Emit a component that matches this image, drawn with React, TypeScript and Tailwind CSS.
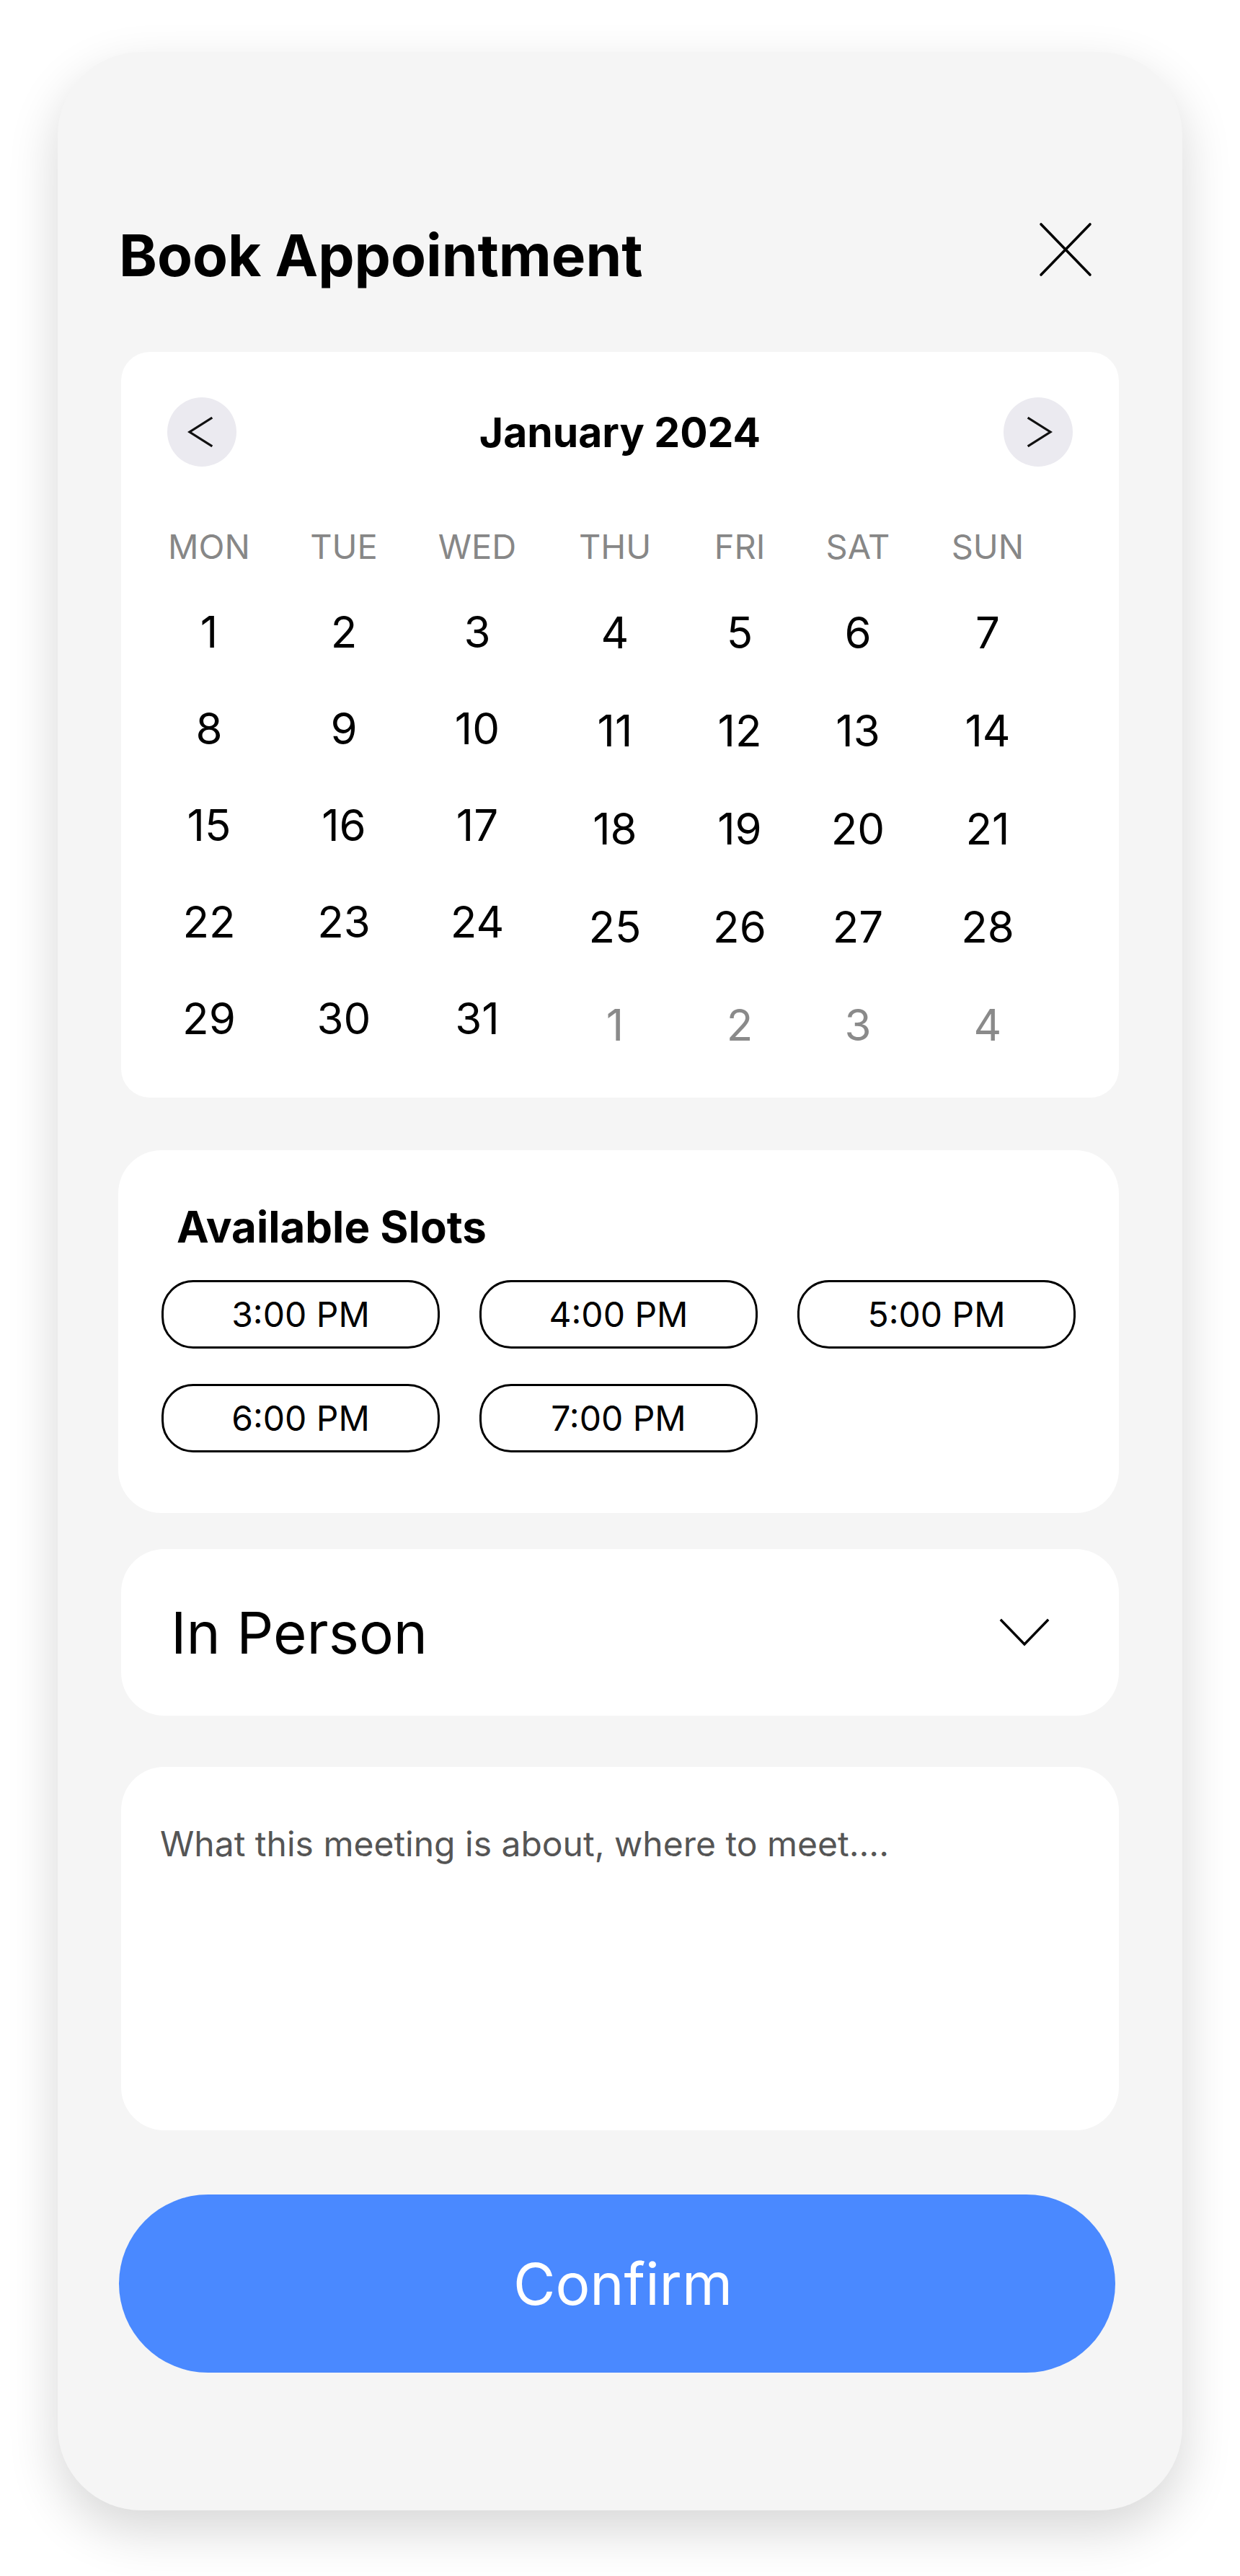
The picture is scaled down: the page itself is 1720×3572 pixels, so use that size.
import React from 'react';

type Day = { n: number; muted?: boolean };

// column offsets follow the reference, which is not an even grid
const columns: { label: string; days: Day[]; rowClass: string; offset: string }[] = [
  { label: 'MON', days: [{ n: 1 }, { n: 8 }, { n: 15 }, { n: 22 }, { n: 29 }], rowClass: 'h-[134px]', offset: 'ml-0' },
  { label: 'TUE', days: [{ n: 2 }, { n: 9 }, { n: 16 }, { n: 23 }, { n: 30 }], rowClass: 'h-[134px]', offset: 'ml-[71px]' },
  { label: 'WED', days: [{ n: 3 }, { n: 10 }, { n: 17 }, { n: 24 }, { n: 31 }], rowClass: 'h-[134px]', offset: 'ml-[69px]' },
  { label: 'THU', days: [{ n: 4 }, { n: 11 }, { n: 18 }, { n: 25 }, { n: 1, muted: true }], rowClass: 'h-[136px]', offset: 'ml-[75px]' },
  { label: 'FRI', days: [{ n: 5 }, { n: 12 }, { n: 19 }, { n: 26 }, { n: 2, muted: true }], rowClass: 'h-[136px]', offset: 'ml-[57px]' },
  { label: 'SAT', days: [{ n: 6 }, { n: 13 }, { n: 20 }, { n: 27 }, { n: 3, muted: true }], rowClass: 'h-[136px]', offset: 'ml-[48px]' },
  { label: 'SUN', days: [{ n: 7 }, { n: 14 }, { n: 21 }, { n: 28 }, { n: 4, muted: true }], rowClass: 'h-[136px]', offset: 'ml-[64px]' },
];

const slots = ['3:00 PM', '4:00 PM', '5:00 PM', '6:00 PM', '7:00 PM'];

const ChevronLeft = () => (
  <svg width="36" height="42" viewBox="0 0 36 42" fill="none">
    <path d="M33 2 L3 21 L33 40" stroke="#111" strokeWidth="3.2" strokeLinecap="square" strokeLinejoin="miter" />
  </svg>
);

const ChevronRight = () => (
  <svg width="36" height="42" viewBox="0 0 36 42" fill="none">
    <path d="M3 2 L33 21 L3 40" stroke="#111" strokeWidth="3.2" strokeLinecap="square" strokeLinejoin="miter" />
  </svg>
);

const CloseIcon = () => (
  <svg width="76" height="78" viewBox="0 0 76 78" fill="none">
    <path d="M4 4 L72 74 M72 4 L4 74" stroke="#000" strokeWidth="3.6" strokeLinecap="round" />
  </svg>
);

const ChevronDown = () => (
  <svg width="70" height="40" viewBox="0 0 70 40" fill="none">
    <path d="M3 3 L35 36 L67 3" stroke="#000" strokeWidth="3.4" strokeLinecap="square" strokeLinejoin="miter" />
  </svg>
);

export default function App() {
  return (
    <div className="min-h-[3572px] w-[1720px] bg-white pt-[72px] pl-[80px] [font-family:Inter,'Noto_Sans',sans-serif] text-black">
      <div className="flex h-[3409px] w-[1560px] flex-col rounded-[116px] bg-[#f5f5f5] px-[88px] pt-[242px] shadow-[0_28px_70px_rgba(0,0,0,0.16)]">
        {/* header */}
        <div className="flex items-start justify-between">
          <h1 className="-ml-[3px] text-[80px] font-bold leading-none">Book Appointment</h1>
          <div className="mr-[36px] -mt-[7px]">
            <CloseIcon />
          </div>
        </div>

        {/* calendar */}
        <div className="mt-[94px] rounded-[40px] bg-white px-[64px] pt-[63px] pb-[33px]">
          <div className="flex items-center justify-between">
            <button className="flex h-[96px] w-[96px] items-center justify-center rounded-full bg-[#ebeaf0] pr-[4px]">
              <ChevronLeft />
            </button>
            <span className="text-[57px] font-bold leading-none">January 2024</span>
            <button className="flex h-[96px] w-[96px] items-center justify-center rounded-full bg-[#ebeaf0] pl-[4px]">
              <ChevronRight />
            </button>
          </div>
          <div className="mt-[87px] flex items-start">
            {columns.map((col) => (
              <div key={col.label} className={`${col.offset} flex w-[116px] flex-col items-center`}>
                <span className="text-[47px] leading-none text-[#878787]">{col.label}</span>
                <div className="mt-[28px] flex flex-col items-center">
                  {col.days.map((d, i) => (
                    <div
                      key={i}
                      className={`${col.rowClass} flex items-center justify-center text-[60px] leading-none ${
                        d.muted ? 'text-[#8a8a8a]' : 'text-black'
                      }`}
                    >
                      {d.n}
                    </div>
                  ))}
                </div>
              </div>
            ))}
          </div>
        </div>

        {/* slots */}
        <div className="-ml-[4px] mt-[73px] rounded-[60px] bg-white px-[60px] pt-[76px] pb-[84px]">
          <h2 className="pl-[21px] text-[60px] font-bold leading-none">Available Slots</h2>
          <div className="mt-[44px] grid grid-cols-[386px_386px_386px] gap-x-[55px] gap-y-[49px]">
            {slots.map((s) => (
              <button
                key={s}
                className="flex h-[95px] items-center justify-center rounded-[44px] border-[3px] border-black bg-white text-[48px] leading-none"
              >
                {s}
              </button>
            ))}
          </div>
        </div>

        {/* meeting type */}
        <div className="mt-[50px] flex h-[231px] items-center justify-between rounded-[60px] bg-white pl-[69px] pr-[96px]">
          <span className="text-[80px] leading-none">In Person</span>
          <ChevronDown />
        </div>

        {/* notes */}
        <div className="mt-[71px] h-[504px] rounded-[60px] bg-white pl-[54px] pt-[83px]">
          <p className="text-[48px] leading-none text-[#555555]">What this meeting is about, where to meet....</p>
        </div>

        {/* confirm */}
        <button className="-ml-[3px] mt-[89px] flex h-[247px] w-[1382px] items-center justify-center rounded-full bg-[#4a89ff] pl-[16px] text-[80px] leading-none text-white">
          Confirm
        </button>
      </div>
    </div>
  );
}
